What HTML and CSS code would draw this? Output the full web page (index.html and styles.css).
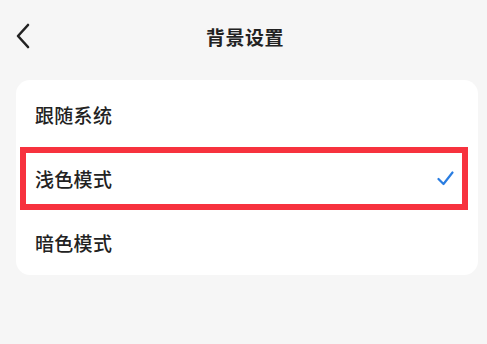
FILE: index.html
```html
<!DOCTYPE html>
<html lang="zh">
<head>
<meta charset="utf-8">
<link rel="stylesheet" href="styles.css">
</head>
<body>
<header class="topbar">
  <div class="back">
    <svg width="16" height="26" viewBox="0 0 16 26"><path d="M13 2 L3 13 L13 24" fill="none" stroke="#222" stroke-width="2.6" stroke-linecap="round" stroke-linejoin="round"/></svg>
  </div>
  <h1 class="title">背景设置</h1>
  <div></div>
</header>
<section class="card">
  <div class="row">跟随系统</div>
  <div class="row">浅色模式
    <svg class="check" width="17" height="15" viewBox="0 0 17 15"><path d="M1.5 8 L6.5 13 L15.5 1.5" fill="none" stroke="#2a7de1" stroke-width="2.2" stroke-linecap="round" stroke-linejoin="round"/></svg>
  </div>
  <div class="row">暗色模式</div>
  <div class="highlight"></div>
</section>
</body>
</html>
```
FILE: styles.css
```css
html, body {
  margin: 0;
  padding: 0;
  background: #f6f6f6;
  font-family: "Noto Sans CJK SC", "Noto Sans", sans-serif;
  color: #222;
}
.topbar {
  height: 72px;
  display: grid;
  grid-template-columns: 1fr auto 1fr;
  align-items: center;
}
.back {
  padding-left: 15px;
  display: flex;
  align-items: center;
}
.title {
  margin: 0;
  font-size: 19px;
  font-weight: 700;
  letter-spacing: 0.5px;
  padding-left: 3px;
}
.card {
  position: relative;
  margin: 8px 9px 0 16px;
  background: #fff;
  border-radius: 14px;
  padding: 2px 0 1px;
}
.row {
  height: 64px;
  display: flex;
  align-items: center;
  justify-content: space-between;
  padding: 0 24px 0 19px;
  font-size: 19px;
  font-weight: 500;
  letter-spacing: 0.3px;
}
.check {
  display: block;
}
.highlight {
  position: absolute;
  left: 4px;
  top: 67px;
  width: 448px;
  height: 63px;
  box-sizing: border-box;
  border: 6px solid #f7323e;
}
```
